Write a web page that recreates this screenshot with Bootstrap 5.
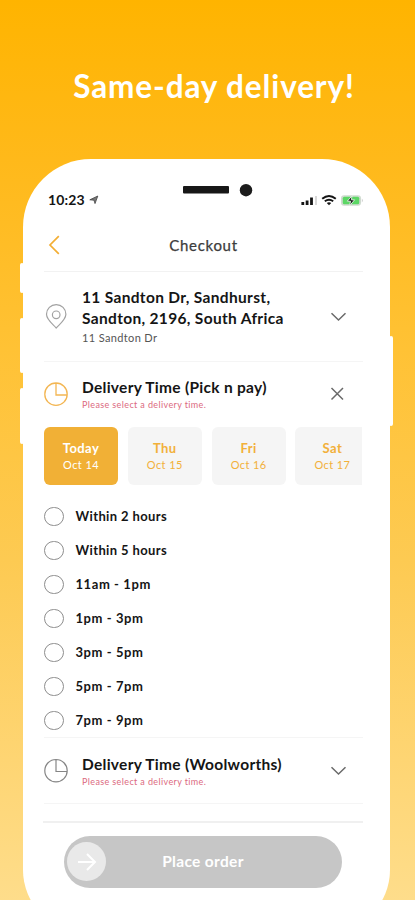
<!DOCTYPE html>
<html lang="en">
<head>
<meta charset="utf-8">
<meta name="viewport" content="width=device-width, initial-scale=1">
<title>Same-day delivery</title>
<link href="https://cdn.jsdelivr.net/npm/bootstrap@5.3.0/dist/css/bootstrap.min.css" rel="stylesheet">
<style>
body{font-family:Lato,"Open Sans",sans-serif;height:900px;overflow:hidden;color:#151515;background:linear-gradient(#ffb400 0,#ffb91a 160px,#ffc235 350px,#fdca52 560px,#fed573 760px,#fedd8b 900px)}
.promo{height:159px;padding-top:66px;padding-left:13px;font-size:31.5px;line-height:40px;letter-spacing:.88px}
.phone{width:367.5px;height:773px;margin-left:22.5px;border-radius:68px 68px 62px 62px;padding:0 27px 0 21.5px}
.side-key{position:absolute;width:4px;background:#fff;border-radius:2px}
.k1{left:-2.5px;top:104px;height:30px}
.k2{left:-2.5px;top:159px;height:55px}
.k3{left:-2.5px;top:229px;height:56px}
.k4{right:-2.5px;top:177px;height:90px}
.status{height:60px;padding:31px 0 0 4px}
.status .clock{font-size:14px;line-height:20px;letter-spacing:.15px}
.notch{left:160px;top:25px}
.bar-head{height:53px;border-bottom:1px solid #f2f2f2}
.bar-head svg{position:absolute;left:3px;top:16px}
.head-title{font-size:15px;line-height:20px;color:#3c3c3c;padding-top:16px;letter-spacing:.7px;-webkit-text-stroke:.25px #3c3c3c}
.sect{border-bottom:1px solid #f5f5f5}
.sect-address{height:90px}
.sect-slots{height:376px}
.sect-closed{height:66px}
.row-open{height:65px}
.sect .ico{width:24px;flex:none}
.sect .body-txt{margin-left:14px;padding-top:15px;flex:1;white-space:nowrap}
.sect-closed .body-txt{padding-top:16px}
.sect .act{width:17px;margin-right:16px;flex:none}
.ttl{font-size:15.5px;line-height:21px;letter-spacing:.33px}
.ttl-time{letter-spacing:.28px}
.sub{font-size:11px;line-height:16px;color:#555;letter-spacing:.36px;padding-top:1px}
.err{font-size:9px;line-height:13px;color:#dc6a80;letter-spacing:.38px}
.days{width:318px;gap:9.8px}
.day{width:74px;height:57.5px;border-radius:6px;background:#f5f5f5;color:#f2b03a;flex:none;padding-top:12px}
.day.on{background:#f1b036;color:#fff}
.day-name{font-size:13px;line-height:18px;letter-spacing:.4px}
.day-date{font-size:11px;line-height:16px;letter-spacing:.4px}
.slots{padding-top:15.2px}
.slot{height:33.95px;gap:12px;font-size:13px;letter-spacing:.38px}
.slot-range{letter-spacing:.58px}
.slot i{width:19.5px;height:19.5px;border:1.2px solid #8d8d8d;border-radius:50%}
footer{padding-top:17px}
.foot{border-top:2px solid #f0f0f0;padding:13px 0 0 21px;margin-left:-1px}
.order{width:278px;height:52px;border-radius:26px;background:#c6c6c6;font-size:15.5px;letter-spacing:.33px;padding-bottom:1px}
.knob{width:39px;height:39px;left:3px;top:6px;background:#e9e9e9}
</style>
<script src="https://cdn.jsdelivr.net/npm/bootstrap@5.3.0/dist/js/bootstrap.bundle.min.js"></script>
</head>
<body>
<h1 class="promo text-white text-center fw-bold m-0">Same-day delivery!</h1>
<main class="phone bg-white position-relative">
  <span class="side-key k1"></span><span class="side-key k2"></span><span class="side-key k3"></span><span class="side-key k4"></span>
  <div class="status d-flex align-items-start">
    <span class="clock fw-bold">10:23</span>
    <svg class="ms-1 mt-1" width="10" height="12" viewBox="0 0 10 12"><path d="M.8 5.800 8.800 2 6 9.600 5 6.200z" fill="#777" stroke="#444" stroke-width=".8"/></svg>
    <svg class="notch position-absolute" width="72" height="14" viewBox="0 0 72 14"><rect y="2" width="46" height="7.500" rx="1" fill="#171717"/><circle cx="63" cy="6.200" r="6.200" fill="#1c1c1c"/></svg>
    <svg class="ms-auto mt-1" width="64" height="13" viewBox="0 0 64 13">
      <path d="M3.800 8v3M8.100 6.500V11M12.500 3.500V11" stroke="#151515" stroke-width="2.800"/><path d="M17 2v9" stroke="#d8d8d8" stroke-width="2"/>
      <path d="M23.200 4.800Q30 -.9 36.800 4.800M25.800 7.300Q30 4 34.200 7.300" fill="none" stroke="#151515" stroke-width="1.900"/><path d="M27.800 9Q30 7.300 32.200 9L30 11.200z" fill="#151515"/>
      <rect x="42" y="1.200" width="20" height="10.500" rx="3" fill="#d0dbd0"/><rect x="43.800" y="2.700" width="16.400" height="7.500" rx="1.500" fill="#5cd765"/><path d="M62.800 4.500q2 2 0 4z" fill="#ccc"/><path d="m53 1.800-4.700 5.400h3.200l-.9 4.600 5-6h-3.200z" fill="#151515" stroke="#e8f5e8" stroke-width=".9"/>
    </svg>
  </div>
  <header class="bar-head position-relative text-center">
    <svg width="14" height="20" viewBox="0 0 14 20"><path d="M11.800 1.200 3 10l8.800 8.800" fill="none" stroke="#f3ae35" stroke-width="1.700"/></svg>
    <div class="head-title">Checkout</div>
  </header>
  <section class="sect sect-address d-flex">
    <svg class="ico" height="90" viewBox="0 0 24 90"><g fill="none" stroke="#a2a2a2" stroke-width="1.200"><path d="M12.200 56C8 51.500 2.500 47.500 2.500 42.300a9.700 9.700 0 0 1 19.400 0C21.900 47.500 16.500 51.500 12.200 56z"/><circle cx="12.200" cy="42.800" r="3.800"/></g></svg>
    <div class="body-txt"><div class="ttl fw-bold">11 Sandton Dr, Sandhurst,<br>Sandton, 2196, South Africa</div><div class="sub">11 Sandton Dr</div></div>
    <svg class="act" height="90" viewBox="0 0 17 90"><path d="m1.500 41.200 7 6.800 7-6.800" fill="none" stroke="#6a6a6a" stroke-width="1.500"/></svg>
  </section>
  <section class="sect sect-slots">
    <div class="row-open d-flex">
      <svg class="ico" height="65" viewBox="0 -20 24 65"><path d="M12 1a11.200 11.200 0 1 0 11.200 11.200M12 1v12h11.200M12 1a11.200 11.200 0 0 1 11.200 11.200" fill="none" stroke="#f3b653" stroke-width="1.300"/></svg>
      <div class="body-txt"><div class="ttl ttl-time fw-bold">Delivery Time (Pick n pay)</div><div class="err">Please select a delivery time.</div></div>
      <svg class="act" height="65" viewBox="0 -24 17 65"><path d="m1.500 2 11.500 11.500M13 2 1.500 13.500" fill="none" stroke="#6a6a6a" stroke-width="1.500"/></svg>
    </div>
    <div class="days d-flex overflow-hidden text-center">
      <div class="day on"><div class="day-name fw-bold">Today</div><div class="day-date">Oct 14</div></div>
      <div class="day"><div class="day-name fw-bold">Thu</div><div class="day-date">Oct 15</div></div>
      <div class="day"><div class="day-name fw-bold">Fri</div><div class="day-date">Oct 16</div></div>
      <div class="day"><div class="day-name fw-bold">Sat</div><div class="day-date">Oct 17</div></div>
    </div>
    <div class="slots fw-bold">
      <div class="slot d-flex align-items-center"><i></i>Within 2 hours</div>
      <div class="slot d-flex align-items-center"><i></i>Within 5 hours</div>
      <div class="slot slot-range d-flex align-items-center"><i></i>11am - 1pm</div>
      <div class="slot slot-range d-flex align-items-center"><i></i>1pm - 3pm</div>
      <div class="slot slot-range d-flex align-items-center"><i></i>3pm - 5pm</div>
      <div class="slot slot-range d-flex align-items-center"><i></i>5pm - 7pm</div>
      <div class="slot slot-range d-flex align-items-center"><i></i>7pm - 9pm</div>
    </div>
  </section>
  <section class="sect sect-closed d-flex">
    <svg class="ico" height="65" viewBox="0 -20.500 24 65"><path d="M12 1a11.200 11.200 0 1 0 11.200 11.200M12 1v12h11.200M12 1a11.200 11.200 0 0 1 11.200 11.200" fill="none" stroke="#858585" stroke-width="1.200"/></svg>
    <div class="body-txt"><div class="ttl ttl-time fw-bold">Delivery Time (Woolworths)</div><div class="err">Please select a delivery time.</div></div>
    <svg class="act" height="65" viewBox="0 -28 17 65"><path d="m1.500 1.200 7 6.800 7-6.800" fill="none" stroke="#6a6a6a" stroke-width="1.500"/></svg>
  </section>
  <footer><div class="foot"><div class="order position-relative d-flex align-items-center justify-content-center text-white fw-bold"><span class="knob position-absolute rounded-circle d-flex align-items-center justify-content-center"><svg width="20" height="20" viewBox="0 0 20 20"><path d="M1 10h17M10 2l8 8-8 8" fill="none" stroke="#fff" stroke-width="2"/></svg></span>Place order</div></div></footer>
</main>
</body>
</html>
